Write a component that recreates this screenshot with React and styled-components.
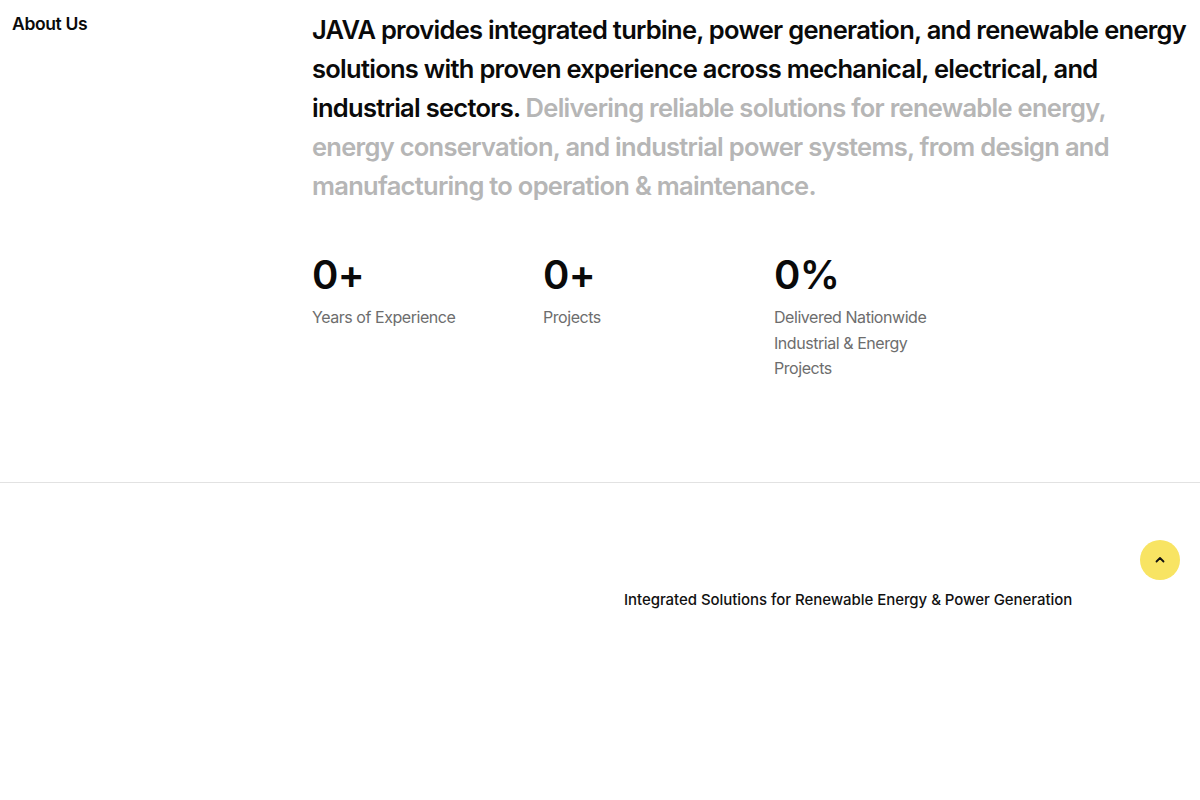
import React from 'react';
import styled, { createGlobalStyle } from 'styled-components';

const GlobalStyle = createGlobalStyle`
  body {
    margin: 0;
    background: #fff;
    font-family: Inter, "Liberation Sans", sans-serif;
    color: #0a0a0a;
  }
`

const stats = [
    { value: '0+', label: 'Years of Experience' },
    { value: '0+', label: 'Projects' },
    { value: '0%', label: 'Delivered Nationwide Industrial & Energy Projects' },
]

const About = styled.section`
    display: grid;
    grid-template-columns: 300px 1fr;
    padding: 10px 12px 100px;
    border-bottom: 1px solid #e2e2e2;
`

const Label = styled.h2`
    margin: 0;
    font-size: 17.5px;
    font-weight: 600;
    letter-spacing: -0.35px;
    line-height: 28px;
`

const Lead = styled.p`
    margin: 0;
    font-size: 25.5px;
    font-weight: 600;
    line-height: 39px;
    letter-spacing: -0.72px;
    color: #0a0a0a;

    span {
        color: #b6b6b6;
    }
`

const Stats = styled.div`
    display: grid;
    grid-template-columns: repeat(3, 231px);
    margin-top: 46px;
`

const Stat = styled.div`
    display: flex;
    flex-direction: column;
    gap: 6px;
`

const Value = styled.div`
    font-size: 40px;
    font-weight: 600;
    line-height: 48px;
    letter-spacing: -0.6px;
`

const StatLabel = styled.div`
    max-width: 170px;
    font-size: 16px;
    line-height: 25.5px;
    letter-spacing: -0.45px;
    color: #6d6d6d;
`

const Footer = styled.footer`
    display: grid;
    grid-template-columns: 1fr 1fr;
    padding: 107px 24px 180px;
`

const Tagline = styled.p`
    grid-column: 2;
    margin: 0;
    padding-left: 24px;
    font-size: 15px;
    font-weight: 500;
    letter-spacing: -0.05px;
    color: #111;
`

const TopButton = styled.button`
    position: fixed;
    right: 20px;
    bottom: 220px;
    width: 40px;
    height: 40px;
    border: none;
    border-radius: 50%;
    background: #f8e463;
    display: flex;
    align-items: center;
    justify-content: center;
    cursor: pointer;
    padding: 0;
`

const App = () => {
    return (
        <>
            <GlobalStyle />
            <About>
                <Label>About Us</Label>
                <div>
                    <Lead>
                        JAVA provides integrated turbine, power generation, and renewable energy solutions with proven experience across mechanical, electrical, and industrial sectors.{' '}
                        <span>Delivering reliable solutions for renewable energy, energy conservation, and industrial power systems, from design and manufacturing to operation &amp; maintenance.</span>
                    </Lead>
                    <Stats>
                        {stats.map(item => (
                            <Stat key={item.label}>
                                <Value>{item.value}</Value>
                                <StatLabel>{item.label}</StatLabel>
                            </Stat>
                        ))}
                    </Stats>
                </div>
            </About>
            <Footer>
                <Tagline>Integrated Solutions for Renewable Energy &amp; Power Generation</Tagline>
            </Footer>
            <TopButton aria-label="Back to top">
                <svg width="12" height="12" viewBox="0 0 12 12" fill="none">
                    <path d="M2.5 7.5L6 4l3.5 3.5" stroke="#111" strokeWidth="1.8" strokeLinecap="round" strokeLinejoin="round" />
                </svg>
            </TopButton>
        </>
    )
}

export default App;
